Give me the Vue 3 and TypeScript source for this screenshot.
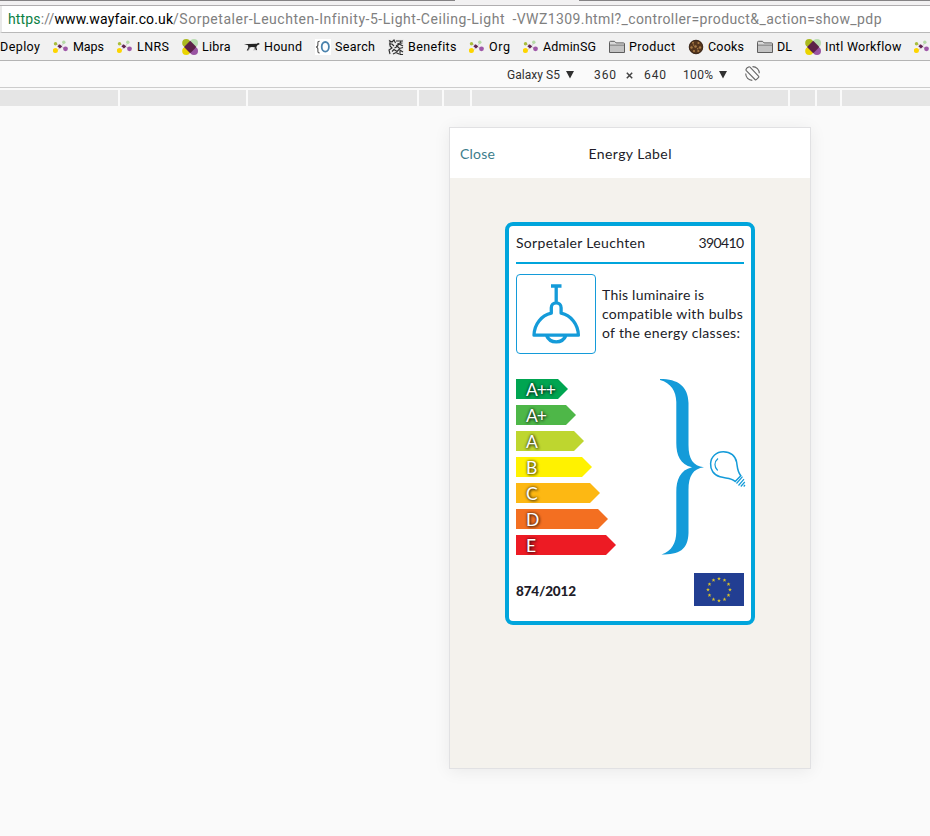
<script setup lang="ts">
type IconKind = 'none' | 'dots' | 'petals' | 'hound' | 'brace' | 'sketch' | 'folder' | 'cookie'

interface Bookmark {
  label: string
  icon: IconKind
  slot: number
  text: number
}

interface EnergyClass {
  name: string
  tone: string
  width: number
  text: number
}

const bookmarks: Bookmark[] = [
  { label: 'Deploy', icon: 'none', slot: 53, text: 40 },
  { label: 'Maps', icon: 'dots', slot: 64, text: 31 },
  { label: 'LNRS', icon: 'dots', slot: 65, text: 32 },
  { label: 'Libra', icon: 'petals', slot: 62, text: 28.5 },
  { label: 'Hound', icon: 'hound', slot: 71, text: 38 },
  { label: 'Search', icon: 'brace', slot: 73, text: 40 },
  { label: 'Benefits', icon: 'sketch', slot: 81, text: 48 },
  { label: 'Org', icon: 'dots', slot: 54, text: 21 },
  { label: 'AdminSG', icon: 'dots', slot: 86, text: 53 },
  { label: 'Product', icon: 'folder', slot: 79, text: 46 },
  { label: 'Cooks', icon: 'cookie', slot: 69, text: 36 },
  { label: 'DL', icon: 'folder', slot: 48, text: 15 },
  { label: 'Intl Workflow', icon: 'petals', slot: 109, text: 76 },
  { label: '', icon: 'dots', slot: 16, text: 0 },
]

const breakpoints: number[] = [118, 126, 169, 23, 26, 316, 25, 23, 89]

const classes: EnergyClass[] = [
  { name: 'A++', tone: 'green', width: 52, text: 30 },
  { name: 'A+', tone: 'leaf', width: 60, text: 21 },
  { name: 'A', tone: 'lime', width: 68, text: 11 },
  { name: 'B', tone: 'yellow', width: 76, text: 10 },
  { name: 'C', tone: 'amber', width: 84, text: 11 },
  { name: 'D', tone: 'orange', width: 92, text: 12 },
  { name: 'E', tone: 'red', width: 100, text: 9 },
]

const stars = Array.from({ length: 12 }, (_, i) => {
  const a = (i * Math.PI) / 6
  return { x: 25 + 11 * Math.sin(a), y: 16.7 - 11 * Math.cos(a) }
})

// Tracks a line of text so that it fills the given width,
// and cancels the spacing that would trail the last letter.
const vFit = {
  mounted(el: HTMLElement, binding: { value: number }) {
    const n = (el.textContent ?? '').length
    if (n < 2 || !binding.value) return
    const natural = el.getBoundingClientRect().width
    const spacing = (binding.value - natural) / (n - 1)
    el.style.letterSpacing = `${spacing}px`
    el.style.marginRight = `${-spacing}px`
  },
}
</script>

<template>
  <div class="window">
    <div class="tabs"><i class="tab-line left"></i><i class="tab-line right"></i></div>
    <div class="address">
      <span v-fit="165" class="origin"><span class="scheme">https</span><span class="path">://</span>www.wayfair.co.uk</span>
      <span v-fit="331" class="path">/Sorpetaler-Leuchten-Infinity-5-Light-Ceiling-Light</span>
      <span v-fit="369" class="path rest">-VWZ1309.html?_controller=product&amp;_action=show_pdp</span>
    </div>

    <nav class="bookmarks">
      <div v-for="(b, i) in bookmarks" :key="i" class="bookmark" :style="{ width: b.slot + 'px' }">
        <svg v-if="b.icon === 'dots'" class="icon" viewBox="0 0 16 16">
          <path d="M3 4.500 8 7.500 12 3M4 11.500l4-4 5 2.500" stroke="#cfc3cf" stroke-width="1" fill="none" />
          <circle cx="2.500" cy="4.700" r="1.700" fill="#a9bd3c" />
          <circle cx="10.800" cy="3.200" r="1.700" fill="#b5dba6" />
          <path d="M4.300 7.200 6.700 5.200 9.200 7.400 7 9.400z" fill="#602550" />
          <circle cx="2.400" cy="11.500" r="2.500" fill="#fdd500" />
          <circle cx="12.500" cy="9.800" r="2.400" fill="#9e58a7" />
        </svg>
        <svg v-else-if="b.icon === 'petals'" class="icon" viewBox="0 0 16 16">
          <circle cx="4.200" cy="4" r="4" fill="#aab91e" />
          <circle cx="12" cy="4" r="4" fill="#b9dcb0" />
          <circle cx="4.200" cy="12" r="4" fill="#ead400" />
          <circle cx="12" cy="12" r="4" fill="#9954a2" />
          <path d="M8.200 1.800 14.400 8 8.200 14.200 2 8z" fill="#5c2148" />
        </svg>
        <svg v-else-if="b.icon === 'hound'" class="icon" viewBox="0 0 16 16">
          <path d="M0 5.200 4 5l9-.2 1-1 1.700 1-.4.8-1.600.5-1.400 2 .8 3-1.300.1-1-3-3-.3-2 .6-1.800 3H2.700l1.600-3L4 6.200z" fill="#222" />
          <path d="M5.500 8 4.500 11.400M11 8l-1 3.400" stroke="#777" stroke-width=".7" />
        </svg>
        <svg v-else-if="b.icon === 'brace'" class="icon" viewBox="0 0 16 16">
          <path d="M0 0h16v16H0z" fill="#fff" />
          <path d="M4.700 2.200C2.500 2.200 2.900 3.500 2.900 5.500S2.500 7.900 1 8c1.500.1 1.900.5 1.900 2.500s-.4 3.500 1.800 3.500" fill="none" stroke="#555" stroke-width="1.100" />
          <ellipse cx="10.300" cy="7.800" rx="3.600" ry="4.800" fill="none" stroke="#4b83ad" stroke-width="1.800" />
        </svg>
        <svg v-else-if="b.icon === 'sketch'" class="icon" viewBox="0 0 16 16">
          <path d="M0 0h16v16H0z" fill="#ececec" />
          <path d="M1 1.500l3 1.500 2-2 1.500 3M1 5h3l2 2M2 2v5l2 2-3 2 1 4M8 2h7M9.500 4.500l5-.500M8 7l3-2 4 2M6.500 9l3-1.500 2 2 3.500-1M4 12.500l2-2 3 2 2-2 4 2.500M5 15l3-1.500 3 1.500M12 12v3.500h3M13 2.500l-3 4" fill="none" stroke="#2c2c2c" stroke-width="1.100" />
        </svg>
        <svg v-else-if="b.icon === 'folder'" class="icon" viewBox="0 0 16 16">
          <path d="M.5 13.500V3.300q0-1 1-1h4l1.600 1.600h7.400q1 0 1 1v8.600z" fill="#d8d8d8" stroke="#5d5d5d" />
          <path d="M1 6.200h14" stroke="#5d5d5d" />
          <path d="M1 6.700h14V13H1z" fill="#c2c2c2" />
        </svg>
        <svg v-else-if="b.icon === 'cookie'" class="icon" viewBox="0 0 16 16">
          <circle cx="8" cy="8" r="7" fill="#54351d" />
          <g fill="#a87b45">
            <circle cx="5" cy="3.800" r="1" /><circle cx="10.500" cy="4" r="1.100" /><circle cx="3.500" cy="8.500" r="1.200" />
            <circle cx="7.500" cy="7.500" r="1.300" /><circle cx="12" cy="8.500" r="1.200" /><circle cx="6" cy="12" r="1.100" /><circle cx="10.300" cy="12" r="1.100" />
            <circle cx="5.500" cy="6" r=".7" /><circle cx="9.700" cy="9.700" r=".8" />
          </g>
          <circle cx="8" cy="8" r="6.800" fill="none" stroke="#2e1d12" stroke-width=".8" />
        </svg>
        <span v-if="b.label" v-fit="b.text">{{ b.label }}</span>
      </div>
    </nav>

    <div class="device-bar">
      <span v-fit="53">Galaxy S5</span>
      <svg class="caret" viewBox="0 0 8 8"><path d="M0 0h8L4 7.500z" /></svg>
      <span v-fit="22" class="dim">360</span>
      <svg class="times" viewBox="0 0 7 7"><path d="M.8.8l5.400 5.400M6.200.8.800 6.200" /></svg>
      <span v-fit="22">640</span>
      <span v-fit="30" class="zoom">100%</span>
      <svg class="caret" viewBox="0 0 8 8"><path d="M0 0h8L4 7.500z" /></svg>
      <svg class="rotate" viewBox="0 0 15 15">
        <path d="M2.200 1.700 3.700.9q.7-.3 1.300.300l8.500 8.800q.6.700.1 1.400l-2.300 2.200q-.7.500-1.300-.1L1.300 4.700q-.6-.7-.1-1.600z" />
        <path d="M7.500.6C11.600.6 14.300 3.800 14.300 7.300M7.300 14.400C3.500 14.400.7 11.500.7 7.500" />
      </svg>
    </div>

    <div class="ruler">
      <i v-for="(w, i) in breakpoints" :key="i" :style="{ width: w + 'px' }"></i>
    </div>

    <main class="stage">
      <section class="device">
        <header class="top">
          <a v-fit="35" class="close">Close</a>
          <h1 v-fit="83">Energy Label</h1>
        </header>

        <article class="label">
          <div class="maker">
            <span v-fit="129">Sorpetaler Leuchten</span>
            <span v-fit="45.500">390410</span>
          </div>

          <div class="intro">
            <div class="lamp">
              <svg viewBox="0 0 80 80">
                <path d="M35 12h10.500M40.200 12v16M35.300 39.200v-5.500a4.900 4.900 0 0 1 9.800 0v5.500c10 2.300 17 11 17.300 22H18c.3-11 7.300-19.700 17.300-22zM30.500 61.500c3.500 8.500 15.900 8.500 19.400 0" />
              </svg>
            </div>
            <p>
              <span v-fit="102">This luminaire is</span>
              <span v-fit="141">compatible with bulbs</span>
              <span v-fit="138">of the energy classes:</span>
            </p>
          </div>

          <div class="scale">
            <ul>
              <li v-for="c in classes" :key="c.name" :class="c.tone" :style="{ width: c.width + 'px' }">
                <span v-fit="c.text">{{ c.name }}</span>
              </li>
            </ul>
            <svg class="bracket" viewBox="660 379 86 177">
              <path class="solid" d="M660 379C678 379 688 386 688.500 403V445C688.500 459 693 466 704 467.200C693 468.500 688.500 476 688.500 490V533C688 550 679 554.500 661.500 554.500C672 551 676 543 676.300 532V492C676.300 480 680 470 692 467.200C680 464.500 676.300 455 676.300 443V402C676 391 671 383 660 380Z" />
              <path d="M735.200 481.500C731.500 477.500 726 478.500 720 476.800C713.500 475 710.300 469.500 710.600 463.500C711 456.500 716.500 451.700 723.300 451.700C730.500 451.700 735.700 456 736.700 462.500C737.500 468 737.300 471.500 740.800 475.800Z" />
              <path class="thin" d="M718 458.500c-4 3.400-4 8.500-.3 12M736.500 483.500l6-6.800M738.500 485.500l5.500-6.300M740.800 486.500l4-4.500M743.700 486.500l1.300-1.500" />
            </svg>
          </div>

          <div class="foot">
            <strong v-fit="60">874/2012</strong>
            <svg class="flag" viewBox="0 0 50 33">
              <path d="M0 0h50v33H0z" fill="#223e92" />
              <path
                v-for="(s, i) in stars"
                :key="i"
                :transform="`translate(${s.x} ${s.y})`"
                d="M0-1.900.5-.6h1.400L.8.300l.4 1.400L0 .9l-1.200.8.400-1.400L-1.900-.6h1.400z"
                fill="#d8c12b"
              />
            </svg>
          </div>
        </article>
      </section>
    </main>
  </div>
</template>

<style>
body {
  background: #fafafa;
}
</style>

<style scoped>
.window {
  width: 930px;
  height: 836px;
  overflow: hidden;
  background: #fafafa;
  font-family: Roboto, 'Liberation Sans', sans-serif;
  color: #111;
  white-space: nowrap;
}
.window * {
  box-sizing: border-box;
}
svg {
  display: block;
  flex: none;
}
.tabs {
  height: 6px;
  background: #f2f1f2;
  border-bottom: 1px solid #b0aeb0;
  display: flex;
  justify-content: space-between;
}
.tab-line {
  height: 1px;
  background: #858385;
}
.left {
  width: 455px;
}
.right {
  width: 351px;
}
.address {
  height: 27px;
  display: flex;
  align-items: center;
  background: #fff;
  border-bottom: 1px solid #b9b9b9;
  border-left: 2px solid #e9e9e9;
  padding-left: 6px;
  font-size: 14px;
  color: #000;
}
.scheme {
  color: #0b8043;
}
.path {
  color: #808080;
}
.rest {
  margin-left: 8px;
}
.bookmarks {
  height: 28px;
  display: flex;
  background: #f1f1f1;
  border-bottom: 1px solid #b4b4b4;
  font-size: 12.5px;
  color: #000;
}
.bookmark {
  flex: none;
  display: flex;
  align-items: center;
  gap: 4px;
}
.icon {
  width: 16px;
  height: 16px;
}
.device-bar {
  height: 27px;
  display: flex;
  align-items: center;
  padding: 1px 0 0 507px;
  border-bottom: 1px solid #ccc;
  font-size: 12px;
  color: #303030;
}
.caret {
  width: 8px;
  height: 8px;
  margin-left: 6px;
  fill: #303030;
}
.dim {
  margin-left: 20px;
}
.times {
  width: 7px;
  height: 7px;
  margin: 1px 11px 0 10px;
  fill: none;
  stroke: #444;
  stroke-width: 1.5;
}
.zoom {
  margin-left: 17px;
}
.rotate {
  width: 15px;
  height: 15px;
  margin: -2px 0 0 18px;
  fill: none;
  stroke: #666;
  stroke-width: 1.1;
}
.ruler {
  display: flex;
  gap: 2px;
  height: 18px;
  padding-top: 2px;
}
.ruler i {
  flex: none;
  background: #e5e5e5;
}
.stage {
  padding: 21px 0 0 449px;
}
.device {
  width: 362px;
  height: 642px;
  border: 1px solid #e1e1e3;
  background: #f4f2ed;
  box-shadow: 0 2px 16px rgba(0, 0, 0, 0.07);
  font-family: Lato, 'Open Sans', sans-serif;
  color: #211c28;
}
.top {
  height: 50px;
  padding: 1px 10px 0;
  background: #fff;
  display: grid;
  grid-template-columns: 1fr auto 1fr;
  align-items: center;
  font-size: 14px;
}
.close {
  justify-self: start;
  color: #3d7d8c;
}
h1 {
  margin: 0;
  font-size: 14px;
  font-weight: 400;
}
.label {
  width: 250px;
  height: 403px;
  margin: 44px 0 0 55px;
  padding: 0 7px;
  border: 4px solid #00a5dc;
  border-radius: 8px;
  background: #fff;
  font-size: 14px;
}
.maker {
  height: 38px;
  padding-top: 8px;
  display: flex;
  justify-content: space-between;
  border-bottom: 2px solid #00a5dc;
}
.intro {
  display: flex;
  align-items: center;
  gap: 6px;
  margin-top: 10px;
}
.lamp {
  flex: none;
  width: 80px;
  height: 80px;
  border: 1px solid #149bd9;
  border-radius: 4px;
}
.lamp svg {
  width: 80px;
  height: 80px;
  margin: -1px;
  fill: none;
  stroke: #149bd9;
  stroke-width: 3.3;
  stroke-linejoin: round;
}
.intro p {
  margin: 0;
  padding-bottom: 2px;
  line-height: 19px;
  display: flex;
  flex-direction: column;
  align-items: flex-start;
}
.scale {
  display: flex;
  justify-content: space-between;
  margin-top: 25px;
}
ul {
  margin: 0;
  padding: 0;
  list-style: none;
  display: flex;
  flex-direction: column;
  gap: 6px;
}
li {
  height: 20px;
  padding-left: 10px;
  display: flex;
  align-items: center;
  clip-path: polygon(0 0, calc(100% - 10px) 0, 100% 50%, calc(100% - 10px) 100%, 0 100%);
  font-size: 17.5px;
  color: #fff;
  text-shadow: 0 0 3px rgba(0, 0, 0, 0.8), 1px 1px 3px rgba(0, 0, 0, 0.6);
}
.green {
  background: #00a551;
}
.leaf {
  background: #4eb748;
}
.lime {
  background: #bed62f;
}
.yellow {
  background: #fff200;
}
.amber {
  background: #fdb813;
}
.orange {
  background: #f36f21;
}
.red {
  background: #ed1b24;
}
.bracket {
  width: 86px;
  height: 177px;
  margin-right: -2px;
  fill: none;
  stroke: #149bd9;
  stroke-width: 1.5;
}
.bracket .solid {
  fill: #149bd9;
  stroke: none;
}
.bracket .thin {
  stroke-width: 1.2;
}
.foot {
  display: flex;
  justify-content: space-between;
  align-items: center;
  margin-top: 17px;
}
.foot strong {
  padding-top: 2px;
  font-weight: 900;
  font-size: 13.5px;
}
.flag {
  width: 50px;
  height: 33px;
}
</style>
